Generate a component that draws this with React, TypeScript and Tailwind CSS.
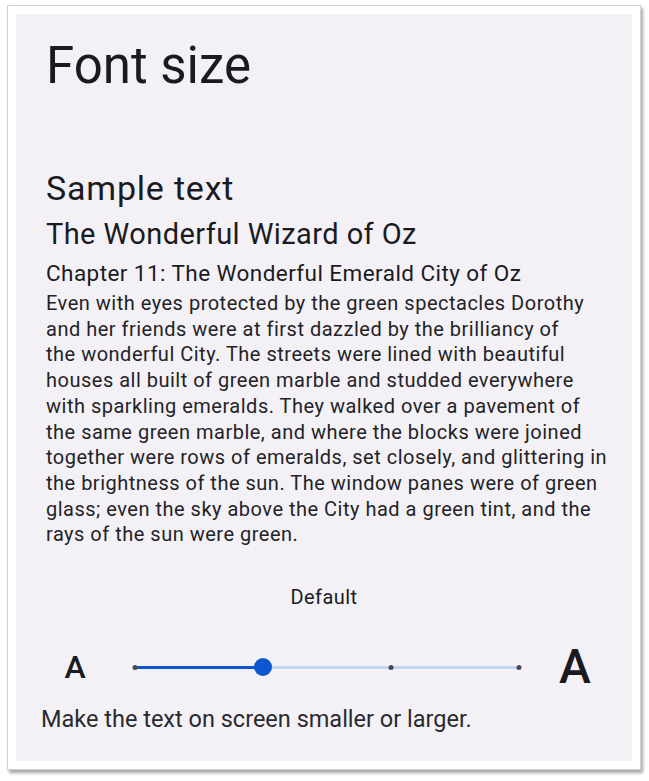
const ticks = [0, 256, 384];

function SizeSlider() {
  return (
    <div className="relative h-[20px] w-[384px]">
      {/* track: filled part up to the thumb, pale remainder */}
      <div className="absolute left-0 top-[8.5px] h-[3px] w-[129px] bg-[#0b57d0]" />
      <div className="absolute left-[129px] top-[8.5px] h-[3px] w-[255px] bg-[#c2d5f2]" />
      {ticks.map((x) => (
        <div
          key={x}
          className="absolute top-[7.5px] h-[5px] w-[5px] -translate-x-1/2 rounded-full bg-[#474a52]"
          style={{ left: x }}
        />
      ))}
      <div className="absolute left-[128px] top-[1px] h-[18px] w-[18px] -translate-x-1/2 rounded-full bg-[#0b57d0]" />
    </div>
  );
}

export default function App() {
  return (
    <div className="min-h-screen bg-white font-['Roboto','Liberation_Sans',sans-serif] text-[#1b1b1f]">
      <div className="absolute left-[7px] top-[5px] h-[765px] w-[634px] border border-[#d2d2d2] bg-white p-[8px] shadow-[2px_3px_3px_rgba(0,0,0,0.35)]">
        <div className="flex h-full flex-col bg-[#f3f1f6]">
          <div className="flex flex-col px-[30px] pt-[22px]">
            <h1 className="text-[51px] leading-[60px]">Font size</h1>
            <div className="mt-[72px] text-[34px] leading-[40px] tracking-[0.8px]">Sample text</div>
            <div className="mt-[8px] text-[29px] leading-[36px] tracking-[0.42px]">
              The Wonderful Wizard of Oz
            </div>
            <div className="mt-[6px] text-[22.5px] leading-[30px] tracking-[0.43px]">
              Chapter 11: The Wonderful Emerald City of Oz
            </div>
            <p className="mt-[3px] whitespace-nowrap text-[20px] leading-[25.7px] tracking-[0.5px] text-[#232327]">
              Even with eyes protected by the green spectacles Dorothy
              <br />
              and her friends were at first dazzled by the brilliancy of
              <br />
              the wonderful City. The streets were lined with beautiful
              <br />
              houses all built of green marble and studded everywhere
              <br />
              with sparkling emeralds. They walked over a pavement of
              <br />
              the same green marble, and where the blocks were joined
              <br />
              together were rows of emeralds, set closely, and glittering in
              <br />
              the brightness of the sun. The window panes were of green
              <br />
              glass; even the sky above the City had a green tint, and the
              <br />
              rays of the sun were green.
            </p>
          </div>

          <div className="mt-[37px] text-center text-[20px] leading-[24px] tracking-[0.4px]">Default</div>

          <div className="mt-[30px] flex h-[56px] items-center pl-[39px]">
            <div className="w-[40px] text-center text-[32px] font-medium leading-none">A</div>
            <div className="ml-[40px]">
              <SizeSlider />
            </div>
            <div className="ml-[26px] w-[60px] text-center text-[48px] font-medium leading-none">A</div>
          </div>

          <div className="mt-[10px] pl-[25px] text-[23.5px] leading-[28px] text-[#2a2a2e]">
            Make the text on screen smaller or larger.
          </div>
        </div>
      </div>
    </div>
  );
}
